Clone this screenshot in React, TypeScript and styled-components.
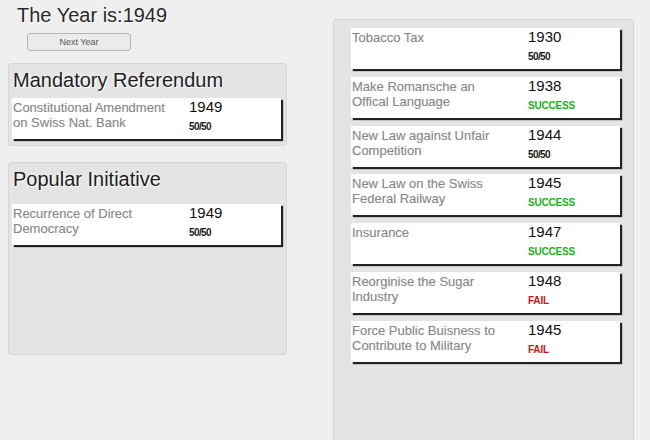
import React from "react";
import styled, { createGlobalStyle } from "styled-components";

const Global = createGlobalStyle`
  html, body { margin: 0; padding: 0; background: #efefef; }
  body { font-family: "Liberation Sans", Arial, sans-serif; overflow: hidden; }
`;

const Page = styled.div`
  display: flex;
  align-items: flex-start;
  padding-left: 8px;
  width: 650px;
  height: 440px;
  box-sizing: border-box;
  overflow: hidden;
`;

const LeftColumn = styled.div`
  display: flex;
  flex-direction: column;
  align-items: flex-start;
  width: 279px;
  padding-top: 4px;
`;

const YearTitle = styled.h1`
  margin: 0 0 0 9px;
  font-size: 20px;
  line-height: 23px;
  font-weight: normal;
  color: #2a2a2a;
  text-shadow: 1px 1px 1px #fff;
`;

const NextButton = styled.button`
  margin: 6px 0 0 19px;
  width: 104px;
  height: 18px;
  padding: 0;
  background: #ebebeb;
  border: 1px solid #b4b4b4;
  border-radius: 3px;
  font-family: "Liberation Sans", Arial, sans-serif;
  font-size: 9px;
  color: #555;
`;

const Panel = styled.section<{ $top: number; $minH?: number }>`
  box-sizing: border-box;
  width: 279px;
  margin-top: ${(p) => p.$top}px;
  min-height: ${(p) => p.$minH ?? 0}px;
  padding: 5px 5px 6px 3px;
  background: #e4e4e4;
  border: 1px solid #d6d6d6;
  border-radius: 3px;
  display: flex;
  flex-direction: column;
`;

const PanelHeading = styled.h2<{ $after: number }>`
  margin: 0 0 ${(p) => p.$after}px 1px;
  font-size: 20px;
  line-height: 23px;
  font-weight: normal;
  color: #1e1e1e;
  text-shadow: 1px 1px 1px #fff, 0 0 4px #f4f4f4;
`;

const RightPanel = styled.section`
  box-sizing: border-box;
  width: 301px;
  height: 440px;
  margin: 19px 0 0 46px;
  padding: 8px 13px 0 17px;
  background: #e4e4e4;
  border: 1px solid #d3d3d3;
  border-radius: 3px;
  display: flex;
  flex-direction: column;
  gap: 7.8px;
`;

const Card = styled.div`
  box-sizing: border-box;
  width: 269px;
  height: 41px;
  background: #fff;
  box-shadow: 2px 2px 1px #222;
  display: grid;
  grid-template-columns: 176px 1fr;
`;

const CardTitle = styled.div`
  padding: 2px 18px 0 1px;
  font-size: 13px;
  line-height: 15px;
  color: #888;
  text-shadow: 0 0 1px rgba(140, 140, 140, 0.3);
`;

const CardMeta = styled.div`
  display: flex;
  flex-direction: column;
  align-items: flex-start;
  padding-left: 1px;
`;

const CardYear = styled.div`
  font-size: 15px;
  line-height: 17px;
  color: #111;
`;

const Status = styled.div<{ $kind: "pending" | "success" | "fail" }>`
  margin-top: 6px;
  font-size: 10px;
  line-height: 12px;
  font-weight: bold;
  letter-spacing: ${(p) => (p.$kind === "pending" ? "-0.6px" : "-0.2px")};
  color: ${(p) =>
    p.$kind === "success" ? "#17b317" : p.$kind === "fail" ? "#c81616" : "#1a1a1a"};
`;

type Item = { title: string; year: number; status: "pending" | "success" | "fail" };

const label = (s: Item["status"]) =>
  s === "success" ? "SUCCESS" : s === "fail" ? "FAIL" : "50/50";

const VoteCard = ({ item }: { item: Item }) => (
  <Card>
    <CardTitle>{item.title}</CardTitle>
    <CardMeta>
      <CardYear>{item.year}</CardYear>
      <Status $kind={item.status}>{label(item.status)}</Status>
    </CardMeta>
  </Card>
);

const history: Item[] = [
  { title: "Tobacco Tax", year: 1930, status: "pending" },
  { title: "Make Romansche an Offical Language", year: 1938, status: "success" },
  { title: "New Law against Unfair Competition", year: 1944, status: "pending" },
  { title: "New Law on the Swiss Federal Railway", year: 1945, status: "success" },
  { title: "Insurance", year: 1947, status: "success" },
  { title: "Reorginise the Sugar Industry", year: 1948, status: "fail" },
  { title: "Force Public Buisness to Contribute to Military", year: 1945, status: "fail" },
];

export default function App() {
  return (
    <>
      <Global />
      <Page>
        <LeftColumn>
          <YearTitle>The Year is:1949</YearTitle>
          <NextButton>Next Year</NextButton>
          <Panel $top={12}>
            <PanelHeading $after={6}>Mandatory Referendum</PanelHeading>
            <VoteCard
              item={{ title: "Constitutional Amendment on Swiss Nat. Bank", year: 1949, status: "pending" }}
            />
          </Panel>
          <Panel $top={16} $minH={193}>
            <PanelHeading $after={13}>Popular Initiative</PanelHeading>
            <VoteCard item={{ title: "Recurrence of Direct Democracy", year: 1949, status: "pending" }} />
          </Panel>
        </LeftColumn>
        <RightPanel>
          {history.map((h, i) => (
            <VoteCard key={i} item={h} />
          ))}
        </RightPanel>
      </Page>
    </>
  );
}
